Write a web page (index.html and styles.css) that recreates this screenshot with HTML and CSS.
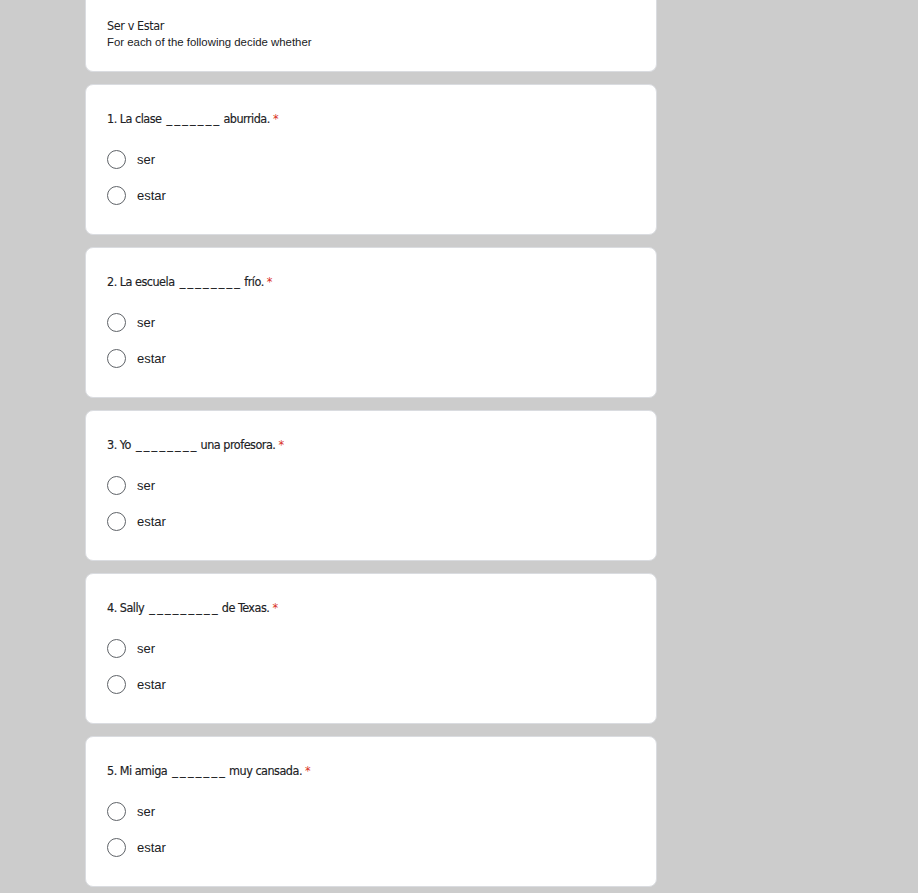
FILE: index.html
```html
<!DOCTYPE html>
<html lang="es">
<head>
<meta charset="utf-8">
<title>Ser v Estar</title>
<link rel="stylesheet" href="styles.css">
</head>
<body>
<main class="form">
  <section class="card header">
    <div class="form-title">Ser v Estar</div>
    <div class="form-desc">For each of the following decide whether</div>
  </section>

  <section class="card question">
    <div class="q-title">1. La clase <span class="blank">_______</span> aburrida. <span class="req">*</span></div>
    <div class="options">
      <label class="opt"><span class="radio"></span><span class="opt-text">ser</span></label>
      <label class="opt"><span class="radio"></span><span class="opt-text">estar</span></label>
    </div>
  </section>

  <section class="card question">
    <div class="q-title">2. La escuela <span class="blank">________</span> frío. <span class="req">*</span></div>
    <div class="options">
      <label class="opt"><span class="radio"></span><span class="opt-text">ser</span></label>
      <label class="opt"><span class="radio"></span><span class="opt-text">estar</span></label>
    </div>
  </section>

  <section class="card question">
    <div class="q-title">3. Yo <span class="blank">________</span> una profesora. <span class="req">*</span></div>
    <div class="options">
      <label class="opt"><span class="radio"></span><span class="opt-text">ser</span></label>
      <label class="opt"><span class="radio"></span><span class="opt-text">estar</span></label>
    </div>
  </section>

  <section class="card question">
    <div class="q-title">4. Sally <span class="blank">_________</span> de Texas. <span class="req">*</span></div>
    <div class="options">
      <label class="opt"><span class="radio"></span><span class="opt-text">ser</span></label>
      <label class="opt"><span class="radio"></span><span class="opt-text">estar</span></label>
    </div>
  </section>

  <section class="card question">
    <div class="q-title">5. Mi amiga <span class="blank">_______</span> muy cansada. <span class="req">*</span></div>
    <div class="options">
      <label class="opt"><span class="radio"></span><span class="opt-text">ser</span></label>
      <label class="opt"><span class="radio"></span><span class="opt-text">estar</span></label>
    </div>
  </section>
</main>
</body>
</html>
```

FILE: styles.css
```css
html, body {
  margin: 0;
  padding: 0;
  background: #cccccc;
}

body {
  font-family: "Liberation Sans", Arial, sans-serif;
  color: #202124;
}

.form {
  width: 572px;
  margin-left: 85px;
  display: flex;
  flex-direction: column;
  gap: 12px;
}

.card {
  background: #ffffff;
  border: 1px solid #dadce0;
  border-radius: 8px;
  box-sizing: border-box;
}

.header {
  border-top: none;
  border-top-left-radius: 0;
  border-top-right-radius: 0;
  height: 72px;
  padding: 17px 21px 0;
}

.form-title {
  font-family: "DejaVu Sans Condensed", sans-serif;
  font-size: 12.5px;
  letter-spacing: -0.4px;
  line-height: 18px;
  color: #202124;
}

.form-desc {
  font-size: 11.4px;
  line-height: 14px;
  color: #202124;
}

.question {
  height: 151px;
  padding: 24px 21px 0;
}

.q-title {
  font-family: "DejaVu Sans Condensed", sans-serif;
  font-size: 12.5px;
  letter-spacing: -0.5px;
  line-height: 20px;
  color: #202124;
  -webkit-text-stroke: 0.15px #202124;
}

.blank {
  letter-spacing: 2.2px;
  margin-left: 2px;
  margin-right: -1px;
}

.req {
  color: #d93025;
  -webkit-text-stroke: 0;
}

.options {
  display: flex;
  flex-direction: column;
  gap: 12px;
  margin-top: 18px;
}

.opt {
  display: flex;
  align-items: center;
  gap: 11px;
  height: 24px;
}

.radio {
  width: 19px;
  height: 19px;
  border: 1.5px solid #5f6368;
  border-radius: 50%;
  box-sizing: border-box;
  flex: none;
}

.opt-text {
  font-size: 13px;
  color: #202124;
}
```
